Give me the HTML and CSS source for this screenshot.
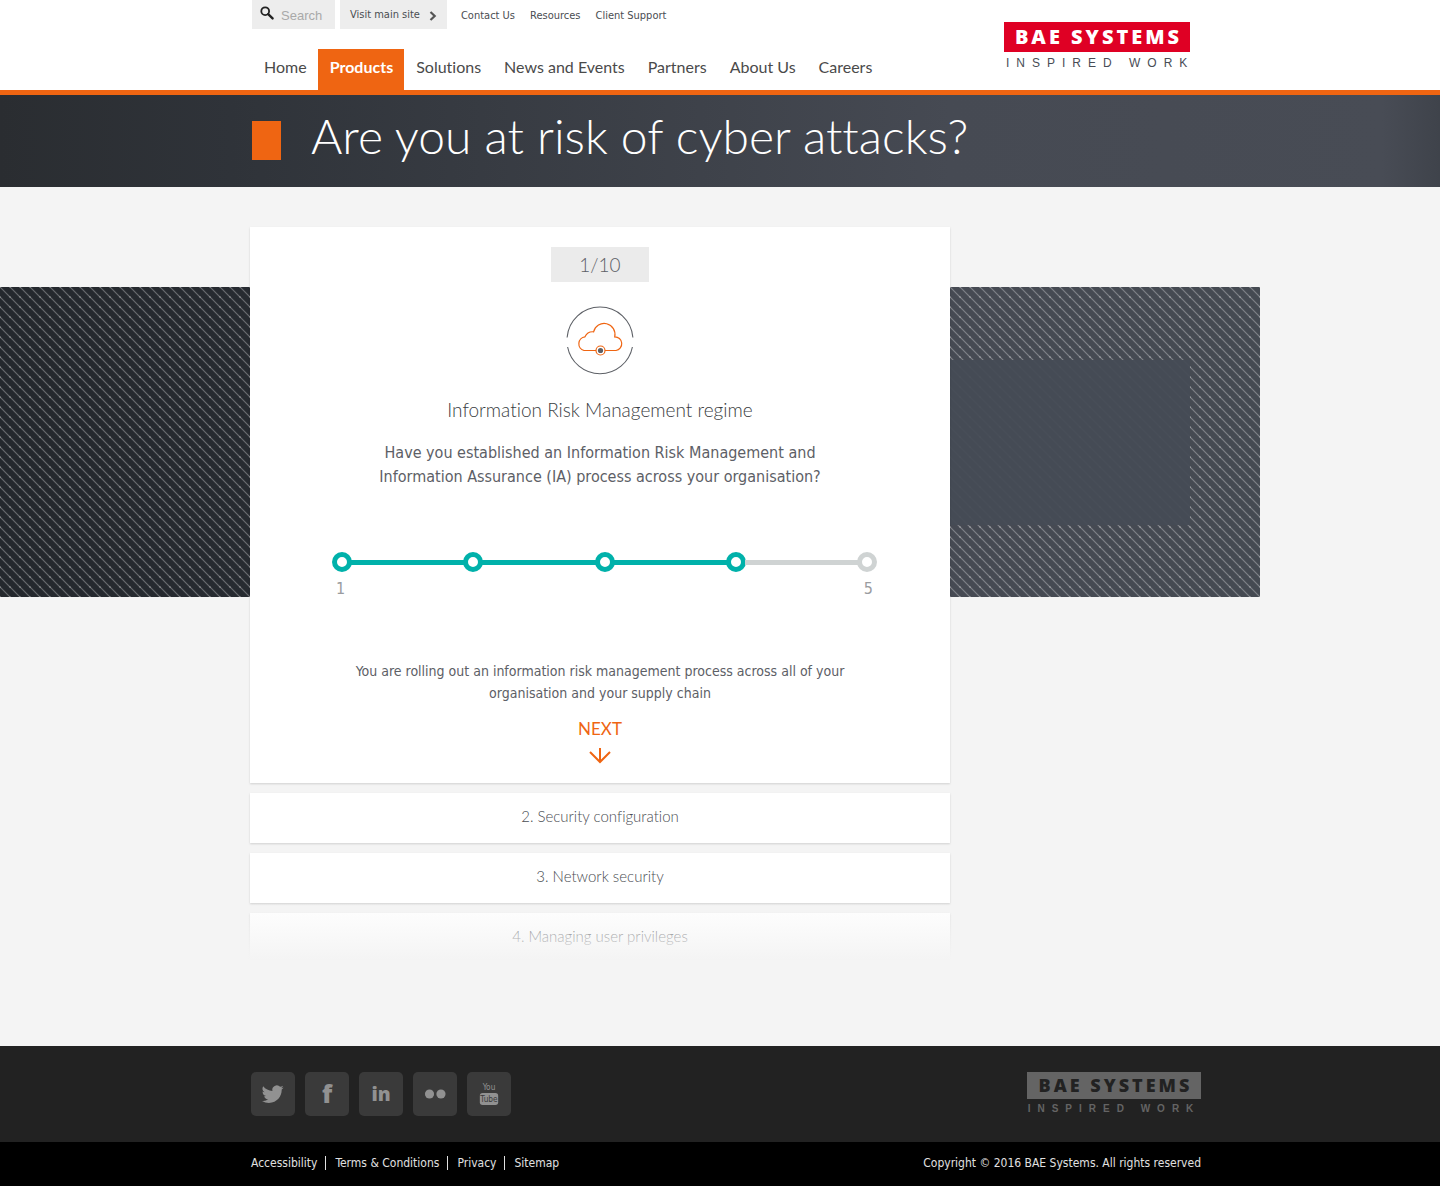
FILE: index.html
```html
<!DOCTYPE html>
<html lang="en">
<head>
    <meta charset="UTF-8">
    <meta name="viewport" content="width=device-width, initial-scale=1.0">
    <title>Are you at risk of cyber attacks? | BAE Systems</title>
    <link rel="stylesheet" href="styles.css">
</head>
<body>
    <header class="header">
        <div class="container header-inner">
            <div class="header-left">
                <div class="topbar">
                    <form class="search">
                        <svg class="search-icon" viewBox="0 0 14 14" aria-hidden="true">
                            <circle cx="5.2" cy="5.2" r="3.9" fill="none" stroke="#222" stroke-width="1.8"/>
                            <path d="M8.2 8.2 L12.6 12.4" stroke="#222" stroke-width="2.4" stroke-linecap="round"/>
                        </svg>
                        <input type="text" placeholder="Search" aria-label="Search">
                    </form>
                    <a href="#" class="main-site">Visit main site
                        <svg class="chevron" viewBox="0 0 8 10" aria-hidden="true">
                            <path d="M1.5 1 L5.7 5 L1.5 9" fill="none" stroke="#555" stroke-width="2.2"/>
                        </svg>
                    </a>
                    <ul class="top-links">
                        <li><a href="#">Contact Us</a></li>
                        <li><a href="#">Resources</a></li>
                        <li><a href="#">Client Support</a></li>
                    </ul>
                </div>
                <nav>
                    <ul class="menu">
                        <li><a href="#">Home</a></li>
                        <li><a href="#" class="active">Products</a></li>
                        <li><a href="#">Solutions</a></li>
                        <li><a href="#">News and Events</a></li>
                        <li><a href="#">Partners</a></li>
                        <li><a href="#">About Us</a></li>
                        <li><a href="#">Careers</a></li>
                    </ul>
                </nav>
            </div>
            <a href="#" class="logo">
                <span class="logo-name">BAE SYSTEMS</span>
                <span class="logo-tag">INSPIRED WORK</span>
            </a>
        </div>
    </header>

    <div class="title-bar">
        <div class="container title-inner">
            <span class="title-mark"></span>
            <h1>Are you at risk of cyber attacks?</h1>
        </div>
    </div>

    <main class="main">
        <div class="band">
            <svg class="band-lines" aria-hidden="true">
                <defs>
                    <pattern id="hatch" width="10" height="10" patternUnits="userSpaceOnUse">
                        <path d="M-1 -1 L11 11 M9 -1 L11 1 M-1 9 L1 11" stroke="#fff" stroke-opacity="0.3" stroke-width="1.2"/>
                        <path d="M0 0h1v1h-1z M9 9h1v1h-1z M9 0h1v1h-1z M0 9h1v1h-1z" fill="#fff" fill-opacity="0.18"/>
                    </pattern>
                </defs>
                <rect width="100%" height="100%" fill="url(#hatch)"/>
            </svg>
            <div class="band-panel"></div>
        </div>

        <div class="container">
            <div class="steps">
                <section class="card">
                    <span class="counter">1/10</span>
                    <svg class="cloud" viewBox="0 0 68 68" aria-hidden="true">
                        <g fill="none" stroke="#5d6066" stroke-width="1.1">
                            <path d="M1.1 30.5 A33 33 0 0 1 66.9 30.5"/>
                            <path d="M1.6 40 A33 33 0 0 0 66.4 40"/>
                        </g>
                        <path d="M18 43.5 A7 7 0 0 1 19 29.8 A8.5 8.5 0 0 1 27.6 24.8 A10.8 10.8 0 0 1 48.7 29.8 A6.9 6.9 0 0 1 50 43.5 Z" fill="none" stroke="#ef6512" stroke-width="1.2"/>
                        <circle cx="34.5" cy="43.5" r="4.5" fill="#fff" stroke="#ef6512" stroke-width="1.2"/>
                        <circle cx="34.5" cy="43.5" r="2.6" fill="#5d6066"/>
                    </svg>
                    <h2>Information Risk Management regime</h2>
                    <p class="question">Have you established an Information Risk Management and Information Assurance (IA) process across your organisation?</p>
                    <div class="scale">
                        <div class="scale-track">
                            <input type="radio" name="level" id="level1" class="done">
                            <span class="line done"></span>
                            <input type="radio" name="level" aria-label="2" class="done">
                            <span class="line done"></span>
                            <input type="radio" name="level" aria-label="3" class="done">
                            <span class="line done"></span>
                            <input type="radio" name="level" aria-label="4" class="done" checked>
                            <span class="line"></span>
                            <input type="radio" name="level" id="level5">
                        </div>
                        <div class="scale-labels">
                            <label for="level1">1</label>
                            <label for="level5">5</label>
                        </div>
                    </div>
                    <p class="answer">You are rolling out an information risk management process across all of your organisation and your supply chain</p>
                    <button type="button" class="next">
                        <span>NEXT</span>
                        <svg viewBox="0 0 22 15" aria-hidden="true">
                            <path d="M11 0 V14 M1 4 L11 14 L21 4" fill="none" stroke="#ef6512" stroke-width="2"/>
                        </svg>
                    </button>
                </section>
                <button type="button" class="step">2. Security configuration</button>
                <button type="button" class="step">3. Network security</button>
                <div class="fading">
                    <button type="button" class="step">4. Managing user privileges</button>
                </div>
            </div>
        </div>
    </main>

    <footer>
        <div class="footer-top">
            <div class="container footer-inner">
                <ul class="social">
                    <li><a href="#" aria-label="Twitter">
                        <svg viewBox="0 0 24 24"><path d="M23.6 4.9c-.9.4-1.8.6-2.8.8 1-.6 1.8-1.6 2.1-2.7-.9.6-2 1-3.1 1.2a4.9 4.9 0 0 0-8.4 4.5C7.4 8.5 3.7 6.5 1.3 3.5a4.9 4.9 0 0 0 1.5 6.5c-.8 0-1.6-.2-2.2-.6v.1c0 2.4 1.7 4.4 3.9 4.8-.7.2-1.5.2-2.2.1.6 2 2.4 3.4 4.6 3.4A9.9 9.9 0 0 1 0 19.5a13.9 13.9 0 0 0 7.5 2.2c9.1 0 14-7.5 14-14v-.6c.9-.7 1.6-1.5 2.1-2.2z"/></svg>
                    </a></li>
                    <li><a href="#" aria-label="Facebook">
                        <svg viewBox="0 0 24 24"><text x="12" y="22" class="glyph-f">f</text></svg>
                    </a></li>
                    <li><a href="#" aria-label="LinkedIn">
                        <svg viewBox="0 0 24 24"><text x="12" y="20" class="glyph-in">in</text></svg>
                    </a></li>
                    <li><a href="#" aria-label="Flickr">
                        <svg viewBox="0 0 24 24"><circle cx="6" cy="12" r="5"/><circle cx="18.5" cy="12" r="5"/></svg>
                    </a></li>
                    <li><a href="#" aria-label="YouTube">
                        <svg viewBox="0 0 24 24"><text x="12" y="8" class="glyph-you">You</text><rect x="2" y="11" width="20" height="13" rx="3"/><text x="12" y="21" class="glyph-tube">Tube</text></svg>
                    </a></li>
                </ul>
                <a href="#" class="logo logo-grey">
                    <span class="logo-name">BAE SYSTEMS</span>
                    <span class="logo-tag">INSPIRED WORK</span>
                </a>
            </div>
        </div>
        <div class="footer-bottom">
            <div class="container footer-inner">
                <ul class="legal">
                    <li><a href="#">Accessibility</a></li>
                    <li><a href="#">Terms &amp; Conditions</a></li>
                    <li><a href="#">Privacy</a></li>
                    <li><a href="#">Sitemap</a></li>
                </ul>
                <p class="copyright">Copyright © 2016 BAE Systems. All rights reserved</p>
            </div>
        </div>
    </footer>
</body>
</html>
```

FILE: styles.css
```css
* {
    box-sizing: border-box;
}

body {
    margin: 0;
    font-family: "DejaVu Sans Condensed", "Noto Sans", sans-serif;
    font-size: 16px;
    font-variant-ligatures: none;
    color: #5d6066;
    background-color: #f4f4f4;
}

h1, h2, p, ul {
    margin: 0;
    padding: 0;
}

ul {
    display: flex;
    list-style-type: none;
}

a {
    color: inherit;
    text-decoration: none;
}

button {
    border: none;
    font-variant-ligatures: none;
    cursor: pointer;
}

svg {
    overflow: visible;
}

.container {
    max-width: 940px;
    margin: 0 auto;
}

/* Header */
.header {
    background-color: #fff;
    border-bottom: 5px solid #ef6512;
}

.header-inner {
    display: flex;
    justify-content: space-between;
    align-items: flex-start;
    padding-left: 2px;
}

.topbar {
    display: flex;
    height: 29px;
    margin-bottom: 20px;
    font-size: 11px;
    line-height: 31px;
    color: #4a4d52;
}

.search {
    display: flex;
    align-items: center;
    width: 83px;
    padding-left: 8px;
    background-color: #ededed;
}

.search-icon {
    width: 14px;
    height: 14px;
    margin-bottom: 3px;
}

.search input {
    width: 54px;
    padding: 2px 0 0 7px;
    border: none;
    background: none;
    font-family: "Liberation Sans", Arial, sans-serif;
    font-size: 13px;
}

.search input::placeholder {
    color: #a9a9a9;
}

.main-site {
    display: flex;
    align-items: center;
    gap: 9px;
    margin-left: 5px;
    padding: 0 10px;
    background-color: #ededed;
}

.chevron {
    width: 8px;
    height: 10px;
    margin-top: 3px;
}

.top-links {
    gap: 15px;
    margin-left: 14px;
}

.menu a {
    display: block;
    height: 41px;
    padding: 0 11px 0 12px;
    font-family: Lato, sans-serif;
    font-size: 16px;
    line-height: 36px;
    color: #4a4a4a;
}

.menu .active {
    background-color: #ef6512;
    color: #fff;
    font-weight: bold;
}

.logo {
    width: 186px;
    margin-top: 22px;
    text-align: center;
    white-space: nowrap;
}

.logo span {
    display: block;
}

.logo-name {
    height: 30px;
    padding-left: 3px;
    background-color: #df0024;
    color: #fff;
    font-family: "Open Sans", sans-serif;
    font-size: 20px;
    font-weight: 800;
    letter-spacing: 3px;
    line-height: 30px;
}

.logo-tag {
    padding-left: 2px;
    color: #484c55;
    font-family: "Liberation Sans", Arial, sans-serif;
    font-size: 12px;
    letter-spacing: 7px;
    line-height: 22px;
}

/* Page title */
.title-bar {
    height: 92px;
    background: linear-gradient(to right, #2a2d31, #2f3339 16%, #464a53 66%, #484c55 96%, #3f434b);
}

.title-inner {
    display: flex;
    align-items: center;
    height: 90px;
    padding-left: 2px;
}

.title-mark {
    width: 29px;
    height: 39px;
    background-color: #ef6512;
}

h1 {
    margin-left: 30px;
    padding-bottom: 8px;
    font-family: Lato, sans-serif;
    font-size: 48px;
    font-weight: 300;
    line-height: 60px;
    color: #fff;
    white-space: nowrap;
}

/* Assessment */
.main {
    position: relative;
    padding: 40px 0 83px;
}

.band {
    position: absolute;
    top: 100px;
    left: 0;
    width: calc(50% + 540px);
    height: 310px;
    background: linear-gradient(to right, #24282d, #272b31 20%, #464a53 76%, #454a52);
}

.band-lines {
    display: block;
    width: 100%;
    height: 100%;
}

.band-panel {
    position: absolute;
    top: 73px;
    right: 70px;
    width: 240px;
    height: 165px;
    background-color: rgba(69, 75, 85, 0.94);
}

.steps {
    position: relative;
    display: flex;
    flex-direction: column;
    gap: 10px;
    max-width: 700px;
}

.card,
.step {
    width: 100%;
    background-color: #fff;
    box-shadow: 0 1px 2px rgba(0, 0, 0, 0.15);
}

.card {
    display: flex;
    flex-direction: column;
    align-items: center;
    padding: 20px 0;
    text-align: center;
}

.counter {
    width: 98px;
    background-color: #ebebeb;
    font-family: Lato, sans-serif;
    font-size: 19px;
    font-weight: 300;
    line-height: 35px;
}

.cloud {
    width: 68px;
    height: 68px;
    margin-top: 25px;
}

h2 {
    margin-top: 23px;
    font-family: Lato, sans-serif;
    font-size: 19px;
    font-weight: 300;
    line-height: 24px;
    color: #3a3d42;
}

.question {
    max-width: 460px;
    margin-top: 19px;
    line-height: 24px;
}

.scale {
    width: 100%;
    margin-top: 63px;
    padding: 0 73px 0 82px;
}

.scale-track {
    display: flex;
    align-items: center;
}

.scale-track input {
    appearance: none;
    flex: none;
    width: 20px;
    height: 20px;
    margin: 0;
    border: 5px solid #cfd3d3;
    border-radius: 50%;
    background-color: #fff;
}

.line {
    flex: 1;
    height: 5px;
    margin: 0 -1px;
    background-color: #cfd3d3;
}

.line.done {
    background-color: #00b1aa;
}

.scale-track input.done {
    border-color: #00b1aa;
}

.scale-labels {
    display: flex;
    justify-content: space-between;
    margin-top: 5px;
    padding: 0 4px;
    line-height: 24px;
    color: #9a9ca0;
}

.answer {
    max-width: 500px;
    margin-top: 59px;
    font-size: 14px;
    line-height: 22px;
}

.next {
    display: flex;
    flex-direction: column;
    align-items: center;
    gap: 7px;
    margin-top: 13px;
    padding: 0;
    background: none;
    font-family: Lato, sans-serif;
    font-size: 17px;
    line-height: 24px;
    color: #ef6512;
}

.next svg {
    width: 22px;
    height: 15px;
}

.step {
    display: block;
    height: 50px;
    padding: 0 0 4px;
    font-family: Lato, sans-serif;
    font-size: 15px;
    font-weight: 300;
    color: #4a4d52;
}

.fading {
    position: relative;
}

.fading::after {
    content: "";
    position: absolute;
    top: -10px;
    right: -30px;
    bottom: -4px;
    left: -30px;
    background: linear-gradient(to bottom, rgba(244, 244, 244, 0), #f4f4f4 90%);
}

/* Footer */
.footer-inner {
    display: flex;
    justify-content: space-between;
    padding-left: 1px;
}

.footer-top {
    height: 96px;
    padding-top: 26px;
    background-color: #222;
}

.social {
    gap: 10px;
}

.social a {
    display: flex;
    align-items: center;
    justify-content: center;
    width: 44px;
    height: 44px;
    border-radius: 5px;
    background-color: #3a3a3a;
}

.social svg {
    width: 22px;
    height: 22px;
    fill: #919191;
}

.social text {
    font-family: "Open Sans", sans-serif;
    font-weight: 800;
    text-anchor: middle;
}

.glyph-f {
    font-size: 27px;
}

.glyph-in {
    font-size: 21px;
}

.social .glyph-you,
.social .glyph-tube {
    font-family: "DejaVu Sans Condensed", sans-serif;
    font-size: 9px;
    font-weight: normal;
}

.glyph-tube {
    fill: #3a3a3a;
}

.logo-grey {
    width: 174px;
    margin: 0 -11px 0 0;
}

.logo-grey .logo-name {
    height: 27px;
    background-color: #646464;
    color: #222;
    font-size: 18px;
    line-height: 27px;
}

.logo-grey .logo-tag {
    padding-left: 0;
    color: #646464;
    font-size: 10px;
    font-weight: bold;
    line-height: 20px;
}

.footer-bottom {
    height: 44px;
    background-color: #000;
    color: #e0e0e0;
    font-size: 12px;
    line-height: 42px;
}

.legal {
    align-items: center;
}

.legal li {
    line-height: 14px;
}

.legal li + li {
    margin-left: 8px;
    padding-left: 9px;
    border-left: 1px solid #e0e0e0;
}

.copyright {
    margin-right: -11px;
}
```
